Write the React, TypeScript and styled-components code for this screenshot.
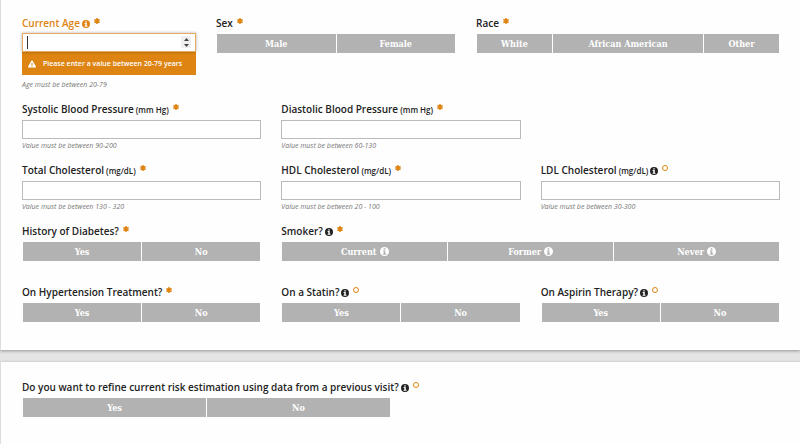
import React, { useState } from "react";
import styled, { createGlobalStyle, css } from "styled-components";
import { FaExclamationTriangle } from "react-icons/fa";

const ORANGE = "#de8413";

const GlobalStyle = createGlobalStyle`
  *, *::before, *::after { box-sizing: border-box; }
  html, body { margin: 0; min-height: 100%; }
  body {
    background: #e4e4e4;
    color: #222;
    font-family: "Open Sans", sans-serif;
  }
`;

const Page = styled.main`
  display: flex;
  flex-direction: column;
  gap: 12px;
  min-height: 100vh;
`;

const Panel = styled.section<{ $last?: boolean }>`
  display: flex;
  flex-direction: column;
  gap: 11px;
  padding: ${(p) => (p.$last ? "18px 20px 15px 21px" : "16px 20px 15px 21px")};
  background: #fefefe;
  border-left: 1px solid #ddd;
  box-shadow: 0 1px 3px rgba(0, 0, 0, 0.35);
  ${(p) => p.$last && css`flex: 1;`}
`;

const Row = styled.div<{ $columns: string }>`
  display: grid;
  grid-template-columns: ${(p) => p.$columns};
  column-gap: 20px;
  align-items: start;
  min-height: 50px;
`;

const FieldBox = styled.div<{ $span?: number; $gap?: number }>`
  display: flex;
  flex-direction: column;
  gap: ${(p) => p.$gap ?? 4}px;
  min-width: 0;
  grid-column: span ${(p) => p.$span ?? 1};
`;

const LabelLine = styled.div<{ $active?: boolean }>`
  display: flex;
  align-items: center;
  height: 14px;
  font-size: 10px;
  line-height: 14px;
  font-weight: 600;
  white-space: nowrap;
  color: ${(p) => (p.$active ? ORANGE : "#222")};
`;

const Unit = styled.small`
  font-size: 8px;
`;

const InfoButton = styled.button`
  display: flex;
  margin: 1px 0 0 2px;
  padding: 0;
  border: 0;
  background: none;
  color: inherit;
  font-size: 8px;
`;

const Marker = styled.span`
  display: flex;
  align-self: flex-start;
  margin: 2px 0 0 4px;
  color: ${ORANGE};
`;

const TextInput = styled.input<{ $active?: boolean }>`
  display: block;
  width: 100%;
  height: 19px;
  padding: 0 5px;
  border: 1px solid #bbb;
  border-radius: 0;
  background: #fff;
  color: #333;
  font: 10px "Open Sans", sans-serif;
  outline: none;
  appearance: textfield;
  &::-webkit-inner-spin-button { appearance: none; }
  ${(p) =>
    p.$active &&
    css`
      border-color: #e8aa5c;
      caret-color: transparent;
      box-shadow: 0 0 3px rgba(0, 0, 0, 0.3);
    `}
`;

const InputFrame = styled.div`
  position: relative;
`;

const Caret = styled.span`
  position: absolute;
  left: 5px;
  top: 3px;
  width: 1px;
  height: 13px;
  background: #333;
`;

const Stepper = styled.div`
  position: absolute;
  right: 5px;
  top: 3px;
  display: flex;
  flex-direction: column;
  width: 10px;
  background: #efefef;
`;

const StepButton = styled.button`
  display: flex;
  justify-content: center;
  align-items: center;
  height: 6px;
  padding: 0;
  border: 0;
  background: none;
  color: #444;
`;

const Alert = styled.div`
  display: flex;
  align-items: center;
  gap: 7px;
  height: 23px;
  padding: 0 0 0 6px;
  background: ${ORANGE};
  color: #fff;
  font-size: 8px;
  line-height: 12px;
  white-space: nowrap;
  svg { flex: none; }
`;

const AlertText = styled.span`
  font-size: 7px;
  font-weight: 600;
`;

const Hint = styled.div<{ $afterAlert?: boolean }>`
  margin-top: ${(p) => (p.$afterAlert ? 1 : -3)}px;
  font-size: 7px;
  line-height: 12px;
  font-style: italic;
  color: #777;
`;

const Choices = styled.div<{ $columns: string }>`
  display: grid;
  grid-template-columns: ${(p) => p.$columns};
  gap: 1px;
  margin: 0 1px;
`;

const Choice = styled.button<{ $on?: boolean }>`
  display: flex;
  align-items: center;
  justify-content: center;
  gap: 3px;
  height: 19px;
  padding: 0;
  border: 0;
  background: ${(p) => (p.$on ? "#8c8c8c" : "#b2b2b2")};
  color: #fff;
  font: 700 9px "Roboto Slab", "DejaVu Serif Condensed", "DejaVu Serif", serif;
  white-space: nowrap;
  svg { font-size: 9px; }
`;

function InfoIcon() {
  return (
    <svg width="1em" height="1em" viewBox="0 0 16 16" aria-hidden="true">
      <path
        fill="currentColor"
        fillRule="evenodd"
        d="M8 0a8 8 0 1 1 0 16A8 8 0 0 1 8 0zM6.6 2.4v2.4h2.9V2.4zM5.2 6.2v1.9h1.4v3.6H5.2v1.9h5.8v-1.9H9.5V6.2z"
      />
    </svg>
  );
}

function Status({ required }: { required?: boolean }) {
  return (
    <Marker title={required ? "Required" : "Optional"}>
      {required ? (
        <svg width="6" height="6" viewBox="0 0 12 12" stroke="currentColor" strokeWidth="3">
          <path d="M6 0v12M.8 3l10.4 6M.8 9l10.4-6" />
        </svg>
      ) : (
        <svg width="6" height="6" viewBox="0 0 12 12" fill="none" stroke="currentColor" strokeWidth="2">
          <circle cx="6" cy="6" r="5" />
        </svg>
      )}
    </Marker>
  );
}

interface CommonProps {
  id: string;
  label: string;
  unit?: string;
  info?: boolean;
  required?: boolean;
}

function Heading({ id, label, unit, info, required, active, group }: CommonProps & { active?: boolean; group?: boolean }) {
  const text = (
    <>
      {label}
      {unit && <Unit> ({unit})</Unit>}
    </>
  );
  return (
    <LabelLine $active={active}>
      {group ? <span id={id}>{text}</span> : <label htmlFor={id}>{text}</label>}
      {info && (
        <InfoButton type="button" aria-label={`About ${label}`}>
          <InfoIcon />
        </InfoButton>
      )}
      <Status required={required} />
    </LabelLine>
  );
}

function NumberField({ hint, ...rest }: CommonProps & { hint: string }) {
  return (
    <FieldBox>
      <Heading {...rest} />
      <TextInput id={rest.id} type="number" aria-describedby={`${rest.id}-hint`} />
      <Hint id={`${rest.id}-hint`}>{hint}</Hint>
    </FieldBox>
  );
}

function AgeField() {
  const [age, setAge] = useState("");
  const step = (by: number) => setAge(String((Number(age) || 20) + by));
  return (
    <FieldBox $gap={3}>
      <Heading id="age" label="Current Age" info required active />
      <div>
        <InputFrame>
          <TextInput
            id="age"
            type="number"
            $active
            value={age}
            onChange={(e) => setAge(e.target.value)}
            aria-invalid="true"
            aria-describedby="age-error age-hint"
          />
          {age === "" && <Caret />}
          <Stepper>
            <StepButton type="button" aria-label="Increase age" onClick={() => step(1)}>
              <svg width="5" height="3" viewBox="0 0 5 3" fill="currentColor"><path d="M0 3 2.5 0 5 3z" /></svg>
            </StepButton>
            <StepButton type="button" aria-label="Decrease age" onClick={() => step(-1)}>
              <svg width="5" height="3" viewBox="0 0 5 3" fill="currentColor"><path d="M0 0h5L2.5 3z" /></svg>
            </StepButton>
          </Stepper>
        </InputFrame>
        <Alert id="age-error" role="alert">
          <FaExclamationTriangle />
          <AlertText>Please enter a value between 20-79 years</AlertText>
        </Alert>
      </div>
      <Hint id="age-hint" $afterAlert>Age must be between 20-79</Hint>
    </FieldBox>
  );
}

function ChoiceField({
  options,
  columns,
  span,
  optionInfo,
  ...rest
}: CommonProps & { options: string[]; columns?: string; span?: number; optionInfo?: boolean }) {
  const [picked, setPicked] = useState<string | null>(null);
  return (
    <FieldBox $span={span}>
      <Heading {...rest} group />
      <Choices role="group" aria-labelledby={rest.id} $columns={columns ?? `repeat(${options.length}, 1fr)`}>
        {options.map((option) => (
          <Choice
            key={option}
            type="button"
            aria-pressed={picked === option}
            $on={picked === option}
            onClick={() => setPicked(option)}
          >
            {option}
            {optionInfo && <InfoIcon />}
          </Choice>
        ))}
      </Choices>
    </FieldBox>
  );
}

const THIRDS = "repeat(3, 1fr)";
const YES_NO = ["Yes", "No"];

export default function App() {
  return (
    <>
      <GlobalStyle />
      <Page>
        <Panel>
          <Row $columns="174fr 240fr 304fr">
            <AgeField />
            <ChoiceField id="sex" label="Sex" required options={["Male", "Female"]} />
            <ChoiceField
              id="race"
              label="Race"
              required
              options={["White", "African American", "Other"]}
              columns="1fr 2fr 1fr"
            />
          </Row>
          <Row $columns={THIRDS}>
            <NumberField id="sbp" label="Systolic Blood Pressure" unit="mm Hg" required hint="Value must be between 90-200" />
            <NumberField id="dbp" label="Diastolic Blood Pressure" unit="mm Hg" required hint="Value must be between 60-130" />
          </Row>
          <Row $columns={THIRDS}>
            <NumberField id="total" label="Total Cholesterol" unit="mg/dL" required hint="Value must be between 130 - 320" />
            <NumberField id="hdl" label="HDL Cholesterol" unit="mg/dL" required hint="Value must be between 20 - 100" />
            <NumberField id="ldl" label="LDL Cholesterol" unit="mg/dL" info hint="Value must be between 30-300" />
          </Row>
          <Row $columns={THIRDS}>
            <ChoiceField id="diabetes" label="History of Diabetes?" required options={YES_NO} />
            <ChoiceField
              id="smoker"
              label="Smoker?"
              info
              required
              options={["Current", "Former", "Never"]}
              span={2}
              optionInfo
            />
          </Row>
          <Row $columns={THIRDS}>
            <ChoiceField id="hypertension" label="On Hypertension Treatment?" required options={YES_NO} />
            <ChoiceField id="statin" label="On a Statin?" info options={YES_NO} />
            <ChoiceField id="aspirin" label="On Aspirin Therapy?" info options={YES_NO} />
          </Row>
        </Panel>
        <Panel $last>
          <Row $columns="repeat(2, 1fr)">
            <ChoiceField
              id="refine"
              label="Do you want to refine current risk estimation using data from a previous visit?"
              info
              options={YES_NO}
            />
          </Row>
        </Panel>
      </Page>
    </>
  );
}
